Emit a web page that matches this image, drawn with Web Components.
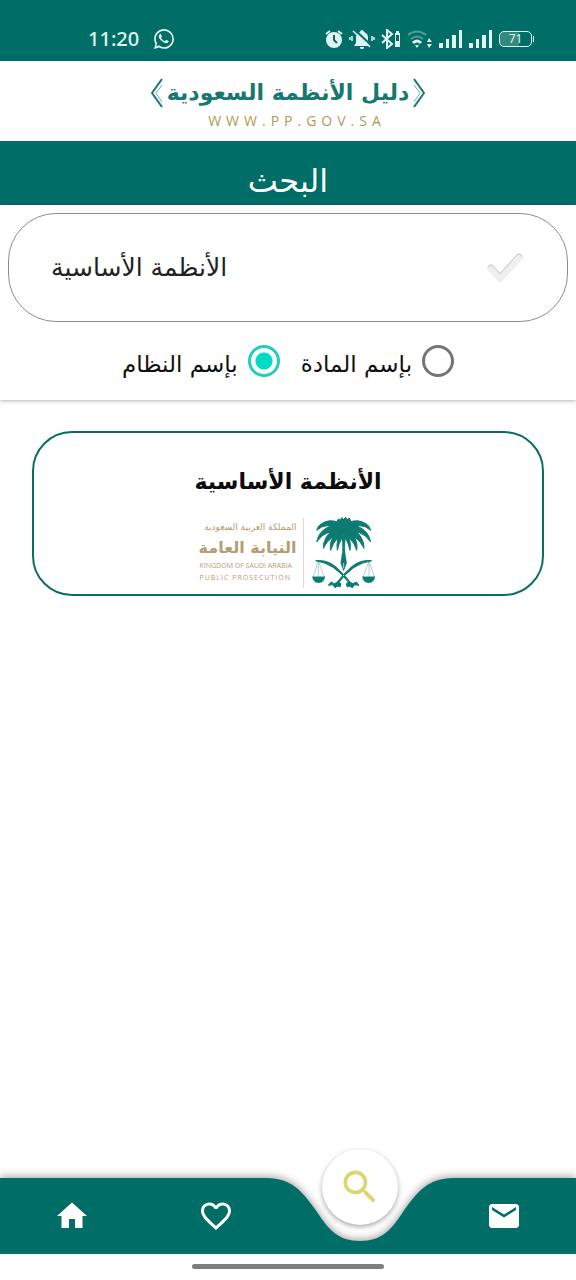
<!DOCTYPE html>
<html lang="ar">
<head>
<meta charset="utf-8">
<meta name="viewport" content="width=device-width, initial-scale=1">
<title>دليل الأنظمة السعودية</title>
<style>
  body { margin: 0; background: #fff; }
</style>
</head>
<body>
<law-app></law-app>
<script>
const define = (name, html, setup) => {
  const template = document.createElement('template');
  template.innerHTML = html;
  customElements.define(name, class extends HTMLElement {
    constructor() {
      super();
      this.attachShadow({ mode: 'open' }).append(template.content.cloneNode(true));
    }
    connectedCallback() { if (setup) setup(this, this.shadowRoot); }
  });
};

define('status-bar', `
<style>
  :host { display: flex; justify-content: space-between; align-items: center; box-sizing: border-box; height: 61px; padding: 16px 42px 0 88px; background: #006e66; color: #e0f5f1; font: 500 20px/28px "Noto Sans", sans-serif; }
  .group { display: flex; align-items: center; }
  .left { gap: 15px; }
  .right { gap: 6px; }
  svg { display: block; fill: currentColor; }
  .battery { display: flex; align-items: center; }
  .level { box-sizing: border-box; width: 33px; height: 16px; border: 1px solid currentColor; border-radius: 5px; font: 12px/14px "Noto Sans", sans-serif; text-align: center; background: linear-gradient(90deg, #34897f 60%, transparent 60%); }
  .tip { width: 1px; height: 6px; margin-left: 1px; background: currentColor; }
</style>
<div class="group left">
  <span>11:20</span>
  <svg width="20" height="20" viewBox="0 0 24 24"><path d="M.057 24l1.687-6.163A11.867 11.867 0 0 1 .157 11.892C.16 5.335 5.495 0 12.05 0a11.817 11.817 0 0 1 8.413 3.488 11.824 11.824 0 0 1 3.48 8.414c-.003 6.557-5.338 11.892-11.893 11.892a11.9 11.9 0 0 1-5.688-1.448L.057 24zm6.597-3.807c1.676.995 3.276 1.591 5.392 1.592 5.448 0 9.886-4.434 9.889-9.885.002-5.462-4.415-9.89-9.881-9.892-5.452 0-9.887 4.434-9.889 9.884a9.86 9.86 0 0 0 1.6 5.391l-.999 3.648 3.888-1.738z"/><path d="M17.5 14.4c-.1-.1-.3-.2-.6-.4l-2-.9c-.3-.1-.5-.1-.7.2l-.9 1.100c-.2.2-.4.2-.7.100-1.700-.8-3.200-2.200-4-3.800-.2-.3 0-.5.100-.6l.7-.9c.1-.2.100-.4 0-.6l-.9-2.100c-.2-.6-.5-.5-.7-.5-.9 0-1.200.3-1.500.8-1.500 2.400.6 5.200 2.800 7.400 2.200 2 4.600 3.200 6.600 2.700 1.200-.4 1.900-1.200 1.800-2.500z"/></svg>
</div>
<div class="group right">
  <svg width="18" height="20" viewBox="0 0 18 20"><circle cx="9" cy="11" r="8"/><path d="M1 5l4-3M17 5l-4-3" stroke="currentColor" stroke-width="2"/><path d="M9 6v5l3 3" fill="none" stroke="#006e66" stroke-width="2"/></svg>
  <svg width="26" height="20" viewBox="0 0 26 20"><path d="M13 1c1 0 2 1 2 2 3 1 4 3 4 6v5l2 3H5l2-3V9c0-3 1-5 4-6 0-1 1-2 2-2zM11 18h4c0 3-4 3-4 0z"/><path d="M6 1l17 16" stroke="#006e66" stroke-width="2"/><path d="M4 2l17 16M3 7v5M1 8v3M23 7v5M25 8v3" stroke="currentColor" stroke-width="1.500"/></svg>
  <svg width="20" height="20" viewBox="0 0 20 20"><path d="M1 6l10 9-5 4V1l5 4-10 9" fill="none" stroke="currentColor" stroke-width="2"/><path d="M15 2h3v2h1v14h-5V4h1z"/><path d="M15 6h3v6h-3z" fill="#006e66"/></svg>
  <svg width="26" height="20" viewBox="0 0 26 20"><g fill="none" stroke="currentColor" stroke-width="2"><path d="M1 6q9-7 18 0M4 10q6-5 12 0" opacity=".35"/><path d="M6 14q4-4 8 0" stroke-width="3"/></g><path d="M8 16h4l-2 3zM20 13l2-4 3 4zM20 15h5l-3 4z"/></svg>
  <svg width="24" height="18" viewBox="0 0 24 18"><path d="M0 13h4v5H0zM7 9h3v9H7zM13 5h4v13h-4zM20 0h3v18h-3z"/></svg>
  <svg width="24" height="18" viewBox="0 0 24 18"><path d="M0 13h4v5H0zM7 9h3v9H7zM13 5h4v13h-4zM20 0h3v18h-3z"/></svg>
  <span class="battery"><span class="level">71</span><span class="tip"></span></span>
</div>`);

define('brand-header', `
<style>
  :host { display: flex; flex-direction: column; align-items: center; box-sizing: border-box; height: 80px; padding-top: 14px; background: #fff; }
  .name { display: flex; align-items: center; gap: 4px; height: 36px; color: #16786f; font: bold 22px/36px "DejaVu Sans", sans-serif; }
  .site { color: #b09a59; font: 14px/20px "Open Sans", sans-serif; letter-spacing: 5px; text-decoration: none; padding-left: 18px; }
  svg { fill: none; stroke: currentColor; }
</style>
<div class="name" dir="rtl">
  <svg width="12" height="32" viewBox="0 0 12 32"><path d="M1 2l10 14L1 30" stroke-width="2"/><path d="M1 8l6 8-6 9" opacity=".6"/></svg>
  <span>دليل الأنظمة السعودية</span>
  <svg width="12" height="32" viewBox="0 0 12 32"><path d="M11 2L1 16l10 14" stroke-width="2"/><path d="M11 8l-6 8 6 9" opacity=".6"/></svg>
</div>
<a class="site" href="#">WWW.PP.GOV.SA</a>`);

define('page-title', `
<style>
  :host { display: block; box-sizing: border-box; height: 64px; padding-top: 16px; background: #006e66; color: #fff; text-align: center; }
  h1 { margin: 0; font: 32px/48px "DejaVu Sans", sans-serif; }
</style>
<h1 dir="rtl"><slot></slot></h1>`);

define('search-field', `
<style>
  :host { display: flex; align-items: center; justify-content: space-between; box-sizing: border-box; height: 109px; padding: 0 43px 0 42px; border: 1px solid #8c8c8c; border-radius: 48px; background: #fff; }
  input { flex: 1; min-width: 0; border: 0; padding: 0; outline: 0; background: none; color: #222; font: 25px/40px "DejaVu Sans", sans-serif; text-align: left; }
  button { border: 0; padding: 0; background: none; }
  svg { display: block; }
</style>
<input type="text" dir="rtl" aria-label="البحث" value="الأنظمة الأساسية">
<button aria-label="بحث">
  <svg width="38" height="32" viewBox="0 0 38 32"><path d="M5 16l9 10L33 5" fill="none" stroke="#d2d2d2" stroke-width="7" stroke-linecap="round" stroke-linejoin="round"/><path d="M5 17l9 10L33 6" fill="none" stroke="#efefef" stroke-width="6" stroke-linecap="round" stroke-linejoin="round"/></svg>
</button>`);

define('radio-option', `
<style>
  :host { display: block; }
  label { display: flex; align-items: center; gap: 10px; color: #111; font: 23px/32px "DejaVu Sans", sans-serif; }
  input { appearance: none; box-sizing: border-box; width: 32px; height: 32px; margin: 0; border: 3px solid #757575; border-radius: 50%; }
  input:checked { border-color: #1fcfba; background: radial-gradient(circle, #00dcc4 8px, transparent 9px); }
  span { padding-top: 6px; }
</style>
<label><input type="radio"><span><slot></slot></span></label>`,
(host, root) => { root.querySelector('input').checked = host.hasAttribute('checked'); });

define('search-panel', `
<style>
  :host { display: block; padding: 8px 8px 0; background: #fff; box-shadow: 0 1px 4px rgba(0,0,0,.3); }
  .options { display: flex; justify-content: center; align-items: center; gap: 21px; height: 78px; }
</style>
<search-field></search-field>
<div class="options" dir="rtl" role="radiogroup">
  <radio-option>بإسم المادة</radio-option>
  <radio-option checked>بإسم النظام</radio-option>
</div>`);

define('palm-emblem', `
<style>
  :host { display: block; }
  svg { display: block; fill: #0d7b71; stroke: #0d7b71; }
</style>
<svg width="66" height="72" viewBox="32 36 198 216">
  <path d="M121 92q7 12 5 50l-5 32 9 24 9-24-5-32q-2-38 5-50z"/>
  <g stroke-width="3">
  <path d="M110 50l4-8 6 4 4-8 6 5 6-6 4 7 7-5 4 10q20 8 8 30l-14 12h-30l-14-12q-10-20 9-29z"/>
  <path d="M116 54Q88 38 59 59q-7 6-10 17 16-15 34-14 19 3 34 15z"/>
  <path d="M144 54q28-16 57 5 7 6 10 17-16-15-34-14-19 3-34 15z"/>
  <path d="M118 62Q85 58 64 80q-11 11-15 31 14-22 34-28 20-5 34-6z"/>
  <path d="M142 62q33-4 54 18 11 11 15 31-14-22-34-28-20-5-34-6z"/>
  <path d="M120 66Q90 74 77 98q-9 16-8 32 10-21 25-31 16-10 30-15z"/>
  <path d="M140 66q30 8 43 32 9 16 8 32-10-21-25-31-16-10-30-15z"/>
  <path d="M122 70Q100 84 92 110q-4 14-1 26 7-22 19-34 11-12 17-20z"/>
  <path d="M138 70q22 14 30 40 4 14 1 26-7-22-19-34-11-12-17-20z"/>
  <path d="M125 76q-19 27-14 60 5-22 12-34zM135 76q19 27 14 60-5-22-12-34z"/>
  <path d="M46 167q35-4 61 19 23 20 43 46l8 4 10-5 8 10-13-2-7 9-9-5-6 3-3-9 6-6q-19-25-44-43-24-16-54-21zM214 167q-35-4-61 19-23 20-43 46l-8 4-10-5-8 10 13-2 7 9 9-5 6 3 3-9-6-6q19-25 44-43 24-16 54-21z"/>
  </g>
  <path d="M36 215h38q-3 18-19 18t-19-18zM186 215h38q-3 18-19 18t-19-18z"/>
  <path d="M54 168l-16 48M54 168l18 48M54 168v48M206 168l-18 48M206 168l16 48M206 168v48" fill="none" stroke-width="1"/>
  <path d="M130 174v16" stroke="#fff" stroke-width="2"/>
</svg>`);

define('prosecution-logo', `
<style>
  :host { display: flex; justify-content: center; align-items: center; gap: 7px; color: #b69c74; }
  .words { width: 97px; padding-right: 6px; border-right: 1px solid #e3d9cd; height: 70px; white-space: nowrap; }
  p { margin: 0; }
  .country { font: 9px/18px "DejaVu Sans", sans-serif; }
  .office { font: bold 16px/24px "DejaVu Sans", sans-serif; }
  .en { font: 7px/12px "Open Sans", sans-serif; text-align: left; }
  .wide { letter-spacing: 1px; }
</style>
<div class="words">
  <p class="country" dir="rtl">المملكة العربية السعودية</p>
  <p class="office" dir="rtl">النيابة العامة</p>
  <p class="en">KINGDOM OF SAUDI ARABIA</p>
  <p class="en wide">PUBLIC PROSECUTION</p>
</div>
<palm-emblem></palm-emblem>`);

define('law-card', `
<style>
  :host { display: block; box-sizing: border-box; height: 165px; padding-top: 26px; border: 2px solid #0b6e66; border-radius: 40px; background: #fff; }
  h2 { margin: 0 0 12px; color: #0c0c0c; text-align: center; font: bold 22px/46px "DejaVu Sans", sans-serif; }
</style>
<h2 dir="rtl"><slot></slot></h2>
<prosecution-logo></prosecution-logo>`);

define('bottom-nav', `
<style>
  :host { display: grid; grid-template-rows: 76px; }
  .back, nav { grid-area: 1 / 1; }
  .back { display: flex; filter: drop-shadow(0 -1px 4px rgba(0,0,0,.4)); }
  .start { width: calc(62.5% - 100px); background: #006e66; }
  .end { flex: 1; background: #006e66; }
  .back svg { display: block; flex: none; fill: #006e66; }
  nav { position: relative; display: grid; grid-template: 76px / repeat(4, 1fr); justify-items: center; align-items: center; color: #fff; }
  a { display: block; color: inherit; }
  a svg { display: block; fill: currentColor; }
  .active { position: relative; top: -29px; display: grid; place-items: center; width: 76px; height: 76px; border-radius: 50%; background: #fff; color: #d9d66b; box-shadow: 0 2px 5px rgba(0,0,0,.35); }
</style>
<div class="back">
  <div class="start"></div>
  <svg width="200" height="76" viewBox="0 0 200 76"><path d="M0 0H6C32 0 43 14 57 34C69 52 78 63 100 63S131 52 143 34C157 14 168 0 194 0H200V76H0z"/></svg>
  <div class="end"></div>
</div>
<nav>
  <a href="#" aria-label="الرئيسية"><svg width="36" height="36" viewBox="0 0 24 24"><path d="M10 20v-6h4v6h5v-8h3L12 3 2 12h3v8z"/></svg></a>
  <a href="#" aria-label="المفضلة"><svg width="36" height="36" viewBox="0 0 24 24"><path d="M16.500 3c-1.740 0-3.410.810-4.500 2.090C10.910 3.810 9.240 3 7.500 3 4.420 3 2 5.420 2 8.500c0 3.780 3.400 6.860 8.550 11.540L12 21.350l1.450-1.320C18.600 15.360 22 12.280 22 8.500 22 5.420 19.580 3 16.500 3zm-4.400 15.550l-.1.100-.1-.1C7.140 14.240 4 11.390 4 8.500 4 6.500 5.500 5 7.500 5c1.540 0 3.040.99 3.570 2.360h1.870C13.460 5.990 14.960 5 16.500 5c2 0 3.500 1.500 3.500 3.500 0 2.890-3.140 5.740-7.900 10.050z"/></svg></a>
  <a href="#" class="active" aria-label="البحث"><svg width="44" height="44" viewBox="0 0 24 24"><path d="M15.500 14h-.79l-.28-.27A6.471 6.471 0 0 0 16 9.500 6.500 6.500 0 1 0 9.500 16c1.610 0 3.090-.59 4.230-1.570l.27.280v.79l5 4.990L20.490 19l-4.990-5zm-6 0C7.010 14 5 11.990 5 9.500S7.010 5 9.500 5 14 7.010 14 9.500 11.990 14 9.500 14z"/></svg></a>
  <a href="#" aria-label="البريد"><svg width="36" height="36" viewBox="0 0 24 24"><path d="M20 4H4c-1.100 0-1.990.9-1.990 2L2 18c0 1.100.9 2 2 2h16c1.100 0 2-.9 2-2V6c0-1.100-.9-2-2-2zm0 4l-8 5-8-5V6l8 5 8-5v2z"/></svg></a>
</nav>`);

define('law-app', `
<style>
  :host { display: flex; flex-direction: column; min-height: 100vh; background: #fff; }
  main { flex: 1; padding: 31px 32px; }
  footer { position: relative; padding: 10px 0 11px; background: #fff; }
  .handle { width: 33.333%; height: 5px; margin: 0 auto; border-radius: 3px; background: #7e7e7e; }
</style>
<status-bar></status-bar>
<brand-header></brand-header>
<page-title>البحث</page-title>
<search-panel></search-panel>
<main><law-card>الأنظمة الأساسية</law-card></main>
<bottom-nav></bottom-nav>
<footer><div class="handle"></div></footer>`);
</script>
</body>
</html>
